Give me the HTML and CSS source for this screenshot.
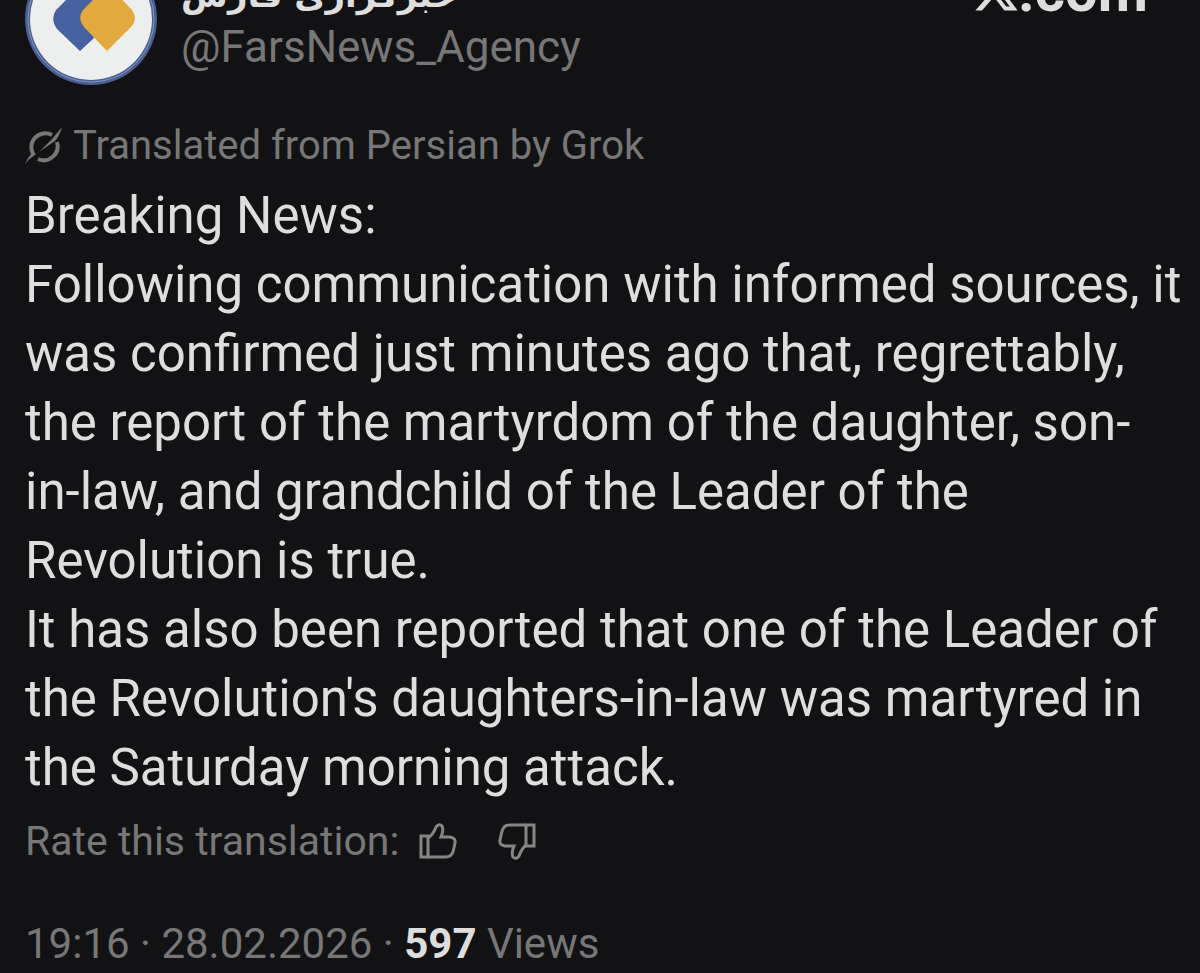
FILE: index.html
```
<!DOCTYPE html>
<html lang="en">
<head>
  <meta charset="utf-8">
  <title>Fars News Agency post</title>
  <link rel="stylesheet" href="styles.css">
</head>
<body>
  <article class="post">
    <header class="post-header">
      <svg class="avatar" viewBox="0 0 132 132" aria-hidden="true">
        <circle cx="66" cy="66" r="66" fill="#4a5f94"/>
        <circle cx="66" cy="66" r="63" fill="none" stroke="#8595bb" stroke-width="1"/>
        <circle cx="66" cy="66" r="61" fill="#ecefed"/>
        <path d="M55 98 L32 76 Q25 66 31 57 L50 38 Q58 32 66 38 L72 44 L66 74 L69 85 Z" fill="#4561a0"/>
        <path d="M82 98 L59 74 Q52 65 58 57 L75 40 Q83 34 91 40 L107 57 Q113 65 107 73 Z" fill="#e2a93f"/>
      </svg>
      <div class="author">
        <div class="name" lang="fa" dir="rtl">خبرگزاری فارس</div>
        <a class="handle" href="#">@FarsNews_Agency</a>
      </div>
      <div class="brand">
        <svg class="brand-x" viewBox="1 2 22 20" aria-hidden="true">
          <path fill="#dedede" d="M18.244 2.25h3.308l-7.227 8.26 8.502 11.24H16.17l-5.214-6.817L4.99 21.75H1.68l7.73-8.835L1.254 2.25H8.08l4.713 6.231zm-1.161 17.52h1.833L7.084 4.126H5.117z"/>
        </svg>
        <span>.com</span>
      </div>
    </header>

    <div class="translated">
      <svg class="grok" viewBox="0 0 38 38" fill="none" stroke="#777778" aria-hidden="true">
        <path d="M8 27 A14 14 0 0 1 27 8" stroke-width="4"/>
        <path d="M13 32 A14 14 0 0 0 32 15" stroke-width="4"/>
        <path d="M0 37 Q3 30 8 25 L11 27 Q5 31 0 37 Z M14 25 L27 12 L37 0 Q34 10 30 14 Z" fill="#777778" stroke="none"/>
      </svg>
      <span>Translated from Persian by Grok</span>
    </div>

    <div class="content">
      <p>Breaking News:</p>
      <p>Following communication with informed sources, it was confirmed just minutes ago that, regrettably, the report of the martyrdom of the daughter, son-<span class="nowrap">in-law,</span> and grandchild of the Leader of the Revolution is true.</p>
      <p>It has also been reported that one of the Leader of the Revolution's daughters-in-law was martyred in the Saturday morning attack.</p>
    </div>

    <div class="rate">
      <span>Rate this translation:</span>
      <button class="thumb" type="button" aria-label="Good translation">
        <svg viewBox="0 0 38 38" fill="none" stroke="#858586" stroke-width="3">
          <path d="M2 14 H9 V35 H2 Z"/>
          <path d="M9 16 Q14 13 17 5 Q20 1 23 4 Q25 8 22 15 H31 Q37 16 36 21 L34 30 Q32 35 27 35 H9"/>
        </svg>
      </button>
      <button class="thumb" type="button" aria-label="Bad translation">
        <svg viewBox="0 0 38 38" fill="none" stroke="#858586" stroke-width="3">
          <path d="M36 3 H28 V24 H36 Z"/>
          <path d="M28 23 Q24 26 21 34 Q18 38 15 35 Q13 31 16 24 H7 Q1 23 2 18 L4 9 Q6 3 11 3 H28"/>
        </svg>
      </button>
    </div>

    <footer class="meta">
      <time datetime="2026-02-28T19:16">19:16 · 28.02.2026</time> · <strong>597</strong> Views
    </footer>
  </article>
</body>
</html>
```

FILE: styles.css
```
body {
  margin: 0;
  background: #121214;
  color: #dedede;
  font-family: Roboto, "DejaVu Sans", sans-serif;
  overflow: hidden;
}

.post {
  padding: 0 16px 0 25px;
}

/* the header is scrolled partly out of view */
.post-header {
  display: flex;
  align-items: flex-start;
  margin-top: -47px;
}

.avatar {
  width: 132px;
  height: 132px;
  flex: none;
}

.author {
  flex: 1;
  margin-left: 24px;
  padding-top: 16px;
}

.name {
  width: fit-content;
  font-size: 34px;
  line-height: 52px;
  font-weight: bold;
  font-family: "DejaVu Sans", sans-serif;
}

.handle {
  display: block;
  font-size: 44px;
  line-height: 52px;
  color: #777778;
  text-decoration: none;
}

.brand {
  display: flex;
  align-items: baseline;
  padding: 6px 36px 0 0;
  font-size: 58px;
  line-height: 64px;
  font-weight: bold;
}

.brand-x {
  width: 44px;
  height: 40px;
}

.translated {
  display: flex;
  align-items: center;
  gap: 10px;
  margin-top: 36px;
  font-size: 40px;
  line-height: 50px;
  color: #777778;
}

.grok {
  width: 38px;
  height: 38px;
}

.content {
  margin-top: 10px;
  font-size: 51px;
  line-height: 69px;
}

.content p {
  margin: 0;
}

.nowrap {
  white-space: nowrap;
}

.rate {
  display: flex;
  align-items: center;
  margin-top: 14px;
  font-size: 41px;
  line-height: 50px;
  color: #777778;
}

.thumb {
  width: 38px;
  height: 38px;
  margin-left: 20px;
  padding: 0;
  border: 0;
  background: none;
}

.thumb + .thumb {
  margin-left: 41px;
}

.thumb svg {
  display: block;
}

.meta {
  margin-top: 52px;
  font-size: 42px;
  line-height: 52px;
  color: #777778;
}

.meta strong {
  color: #dedede;
}
```
